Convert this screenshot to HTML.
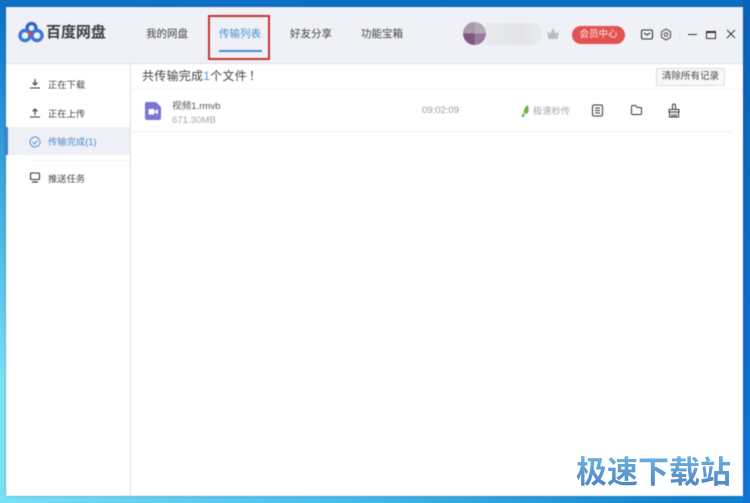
<!DOCTYPE html>
<html><head><meta charset="utf-8">
<style>
html,body{margin:0;padding:0}
body{width:750px;height:503px;position:relative;overflow:hidden;background:#0b74c8;font-family:"Liberation Sans","Noto Sans CJK SC",sans-serif;color:#444}
#bg{position:absolute;inset:0;background:linear-gradient(90deg,rgba(120,225,245,1) 0%,rgba(80,200,240,.85) 45%,rgba(11,110,200,0) 92%),linear-gradient(180deg,#0a6cc0 0%,#1080d0 100%)}
#bgm{position:absolute;left:0;top:0;width:750px;height:503px;background:linear-gradient(180deg,#0b6fc4 0%,rgba(11,111,196,.6) 30%,rgba(11,111,196,0) 75%)}
#right{position:absolute;left:743px;top:0;width:7px;height:503px;background:linear-gradient(180deg,#0a62b5,#0f74d2)}
#win{position:absolute;left:6px;top:7px;width:737px;height:489px;background:#fff;box-shadow:0 0 2px rgba(0,40,90,.5);overflow:hidden}
.a{position:absolute;white-space:nowrap}
#main{filter:blur(.4px);position:absolute;inset:0}
</style></head><body>
<div id="bg"></div><div id="bgm"></div><div id="right"></div>
<div id="main">
<div id="win">
 <div class="a" style="left:0;top:0;width:737px;height:56px;background:#eff1f6;border-bottom:1px solid #dcdfe6"></div>
 <div class="a" style="left:0;top:57px;width:124px;height:432px;border-right:1px solid #dfe1e6"></div>
 <div class="a" style="left:0;top:120px;width:124px;height:28px;background:#eef0f6"></div>
 <div class="a" style="left:0;top:120px;width:2px;height:28px;background:#3f85d8"></div>
 <div class="a" style="left:24px;top:153px;width:100px;height:1px;background:#eceef2"></div>
 <div class="a" style="left:125px;top:82px;width:612px;height:1px;background:#f0f1f4"></div>
 <div class="a" style="left:125px;top:124px;width:600px;height:1px;background:#eeeff3"></div>
</div>
<svg class="a" style="left:16px;top:20px" width="30" height="24" viewBox="0 0 30 24" fill="none">
 <circle cx="15.500" cy="8" r="4.500" stroke="#2f5fc4" stroke-width="3.200"/>
 <circle cx="9" cy="15.500" r="5" stroke="#3a78d8" stroke-width="3.400"/>
 <circle cx="21" cy="15.500" r="5" stroke="#3a78d8" stroke-width="3.400"/>
 <path d="M12 12l4.500 3.500" stroke="#d8474f" stroke-width="2.600"/>
</svg>
<div class="a" style="left:46px;top:23px;font-size:15px;line-height:20px;font-weight:bold;color:#3a3f48;letter-spacing:-.05px">百度网盘</div>
<div class="a" style="left:146px;top:27px;font-size:10.500px;line-height:15px;color:#444">我的网盘</div>
<div class="a" style="left:219px;top:27px;font-size:10.500px;line-height:15px;color:#4a8fd6">传输列表</div>
<div class="a" style="left:219px;top:50px;width:43px;height:1.500px;background:#4a8ad2"></div>
<div class="a" style="left:208px;top:15px;width:58px;height:41px;border:2px solid #c8302f"></div>
<div class="a" style="left:290px;top:27px;font-size:10.500px;line-height:15px;color:#444">好友分享</div>
<div class="a" style="left:361px;top:27px;font-size:10.500px;line-height:15px;color:#444">功能宝箱</div>

<div class="a" style="left:486px;top:23px;width:56px;height:22px;border-radius:0 11px 11px 0;background:linear-gradient(90deg,#e9eaee,#e3e4e8 60%,#eaebf0)"></div>
<div class="a" style="left:463px;top:22px;width:23px;height:23px;border-radius:50%;background:conic-gradient(#b3abb5 0 25%,#9a7a9e 25% 50%,#80577f 50% 75%,#a89aaa 75%)"></div>
<svg class="a" style="left:546px;top:27px" width="14" height="13" viewBox="0 0 14 13"><path d="M1 4l3 3 3-6 3 6 3-3-1.500 8h-9z" fill="#b9bcc4"/></svg>
<div class="a" style="left:572px;top:26px;width:53px;height:18px;border-radius:9px;background:#e2524f;font-size:9.500px;line-height:18px;text-align:center;color:#ffe9e6">会员中心</div>
<svg class="a" style="left:640px;top:29px" width="14" height="11" viewBox="0 0 14 11" fill="none" stroke="#333" stroke-width="1.100"><rect x="1.500" y="1" width="11" height="9" rx="1.500"/><path d="M4 4l3 2 3-2"/></svg>
<svg class="a" style="left:660px;top:28px" width="12" height="13" viewBox="0 0 12 13" fill="none" stroke="#555" stroke-width="1.100"><path d="M6 1l4.500 2.700v5.600L6 12 1.500 9.300V3.700z"/><circle cx="6" cy="6.500" r="1.800"/></svg>
<div class="a" style="left:679px;top:29px;width:1px;height:11px;background:#e2e4ea"></div>
<div class="a" style="left:688px;top:34px;width:9px;height:1px;background:#333"></div>
<div class="a" style="left:706px;top:31px;width:8px;height:5px;border:1px solid #333;border-top-width:2px"></div>
<svg class="a" style="left:726px;top:29px" width="10" height="10" viewBox="0 0 10 10" stroke="#333" stroke-width="1"><path d="M1 1l8 8M9 1l-8 8"/></svg>

<svg class="a" style="left:29px;top:78px" width="12" height="11" viewBox="0 0 12 11" fill="none" stroke="#333" stroke-width="1.100"><path d="M6 1v6M3.500 4.500L6 7l2.500-2.500M1 10h10"/></svg>
<div class="a" style="left:48px;top:76.500px;font-size:9.300px;line-height:14px;color:#444;top:77px;transform:translateY(1px)">正在下载</div>
<svg class="a" style="left:29px;top:107px" width="12" height="11" viewBox="0 0 12 11" fill="none" stroke="#333" stroke-width="1.100"><path d="M6 8V2M3.500 4.500L6 2l2.500 2.500M1 10h10"/></svg>
<div class="a" style="left:48px;top:106px;font-size:9.300px;line-height:14px;color:#444;transform:translateY(1px)">正在上传</div>
<svg class="a" style="left:29px;top:135.500px" width="12" height="12" viewBox="0 0 12 12" fill="none" stroke="#5d94d4" stroke-width="1"><circle cx="6" cy="6" r="5"/><path d="M3.500 6l2 2 3-3.500"/></svg>
<div class="a" style="left:48px;top:135px;font-size:9.300px;line-height:14px;color:#4a8ad0">传输完成(1)</div>
<svg class="a" style="left:29px;top:172px" width="12" height="11" viewBox="0 0 12 11" fill="none" stroke="#333" stroke-width="1.100"><rect x="1.500" y="1" width="9" height="6.500" rx="1"/><path d="M3 10h6"/></svg>
<div class="a" style="left:48px;top:172px;font-size:9.300px;line-height:14px;color:#444">推送任务</div>

<div class="a" style="left:142px;top:68px;font-size:12px;line-height:17px;color:#444;letter-spacing:.25px">共传输完成<span style="color:#5b93d3">1</span>个文件<span style="margin-left:2px">！</span></div>
<div class="a" style="left:656px;top:68px;width:69px;height:18px;box-sizing:border-box;border:1px solid #dcdde0;background:#f8f8f8;font-size:9.500px;line-height:16px;text-align:center;color:#444">清除所有记录</div>

<svg class="a" style="left:145px;top:102px" width="16" height="18" viewBox="0 0 16 18"><path d="M2 0h9l5 5v11a2 2 0 0 1-2 2H2a2 2 0 0 1-2-2V2a2 2 0 0 1 2-2z" fill="#7d74d8"/><rect x="3.500" y="7" width="6" height="5.500" rx="1" fill="#fff"/><path d="M10 9l3-2v5.500l-3-2z" fill="#fff"/></svg>
<div class="a" style="left:172px;top:100px;font-size:9.600px;line-height:14px;color:#555">视频1.rmvb</div>
<div class="a" style="left:172px;top:114px;font-size:9.600px;line-height:14px;color:#a5a7ab">671.30MB</div>
<div class="a" style="left:422px;top:104px;font-size:9.500px;line-height:14px;color:#999">09:02:09</div>
<svg class="a" style="left:521px;top:105px" width="9" height="13" viewBox="0 0 9 13"><path d="M6.500 0C8 2 8 5 7 8L4 9 2.500 7C3 4 4.500 1.500 6.500 0zM2 8l2 2-2 2.500-1.500-1z" fill="#72b33d"/></svg>
<div class="a" style="left:533px;top:104px;font-size:9.300px;line-height:14px;color:#a4a6ab">极速秒传</div>
<svg class="a" style="left:591px;top:104px" width="13" height="13" viewBox="0 0 13 13" fill="none" stroke="#333" stroke-width="1"><rect x="1.500" y="1" width="10" height="11" rx="1.500"/><path d="M4 4h5M4 6.500h5M4 9h5"/></svg>
<svg class="a" style="left:630px;top:104px" width="13" height="12" viewBox="0 0 13 12" fill="none" stroke="#333" stroke-width="1"><path d="M1.500 2.500a1 1 0 0 1 1-1h3l1.500 2h3.500a1 1 0 0 1 1 1v5a1 1 0 0 1-1 1h-8a1 1 0 0 1-1-1z"/></svg>
<svg class="a" style="left:667px;top:103px" width="14" height="15" viewBox="0 0 14 15" fill="none" stroke="#333" stroke-width="1"><path d="M5.500 6V2.500a1.500 1.500 0 0 1 3 0V6M2 6.500h10v2.500H2zM2.500 9v5h9V9M5 11v3M7 11v3M9 11v3"/></svg>
</div>

<div class="a" style="left:576px;top:455px;font-size:31px;line-height:35px;font-weight:bold;background:linear-gradient(180deg,#6db4e4,#4e7fc0);-webkit-background-clip:text;background-clip:text;color:transparent;font-family:'Liberation Sans','Noto Sans CJK SC',sans-serif">极速下载站</div>
</body></html>
